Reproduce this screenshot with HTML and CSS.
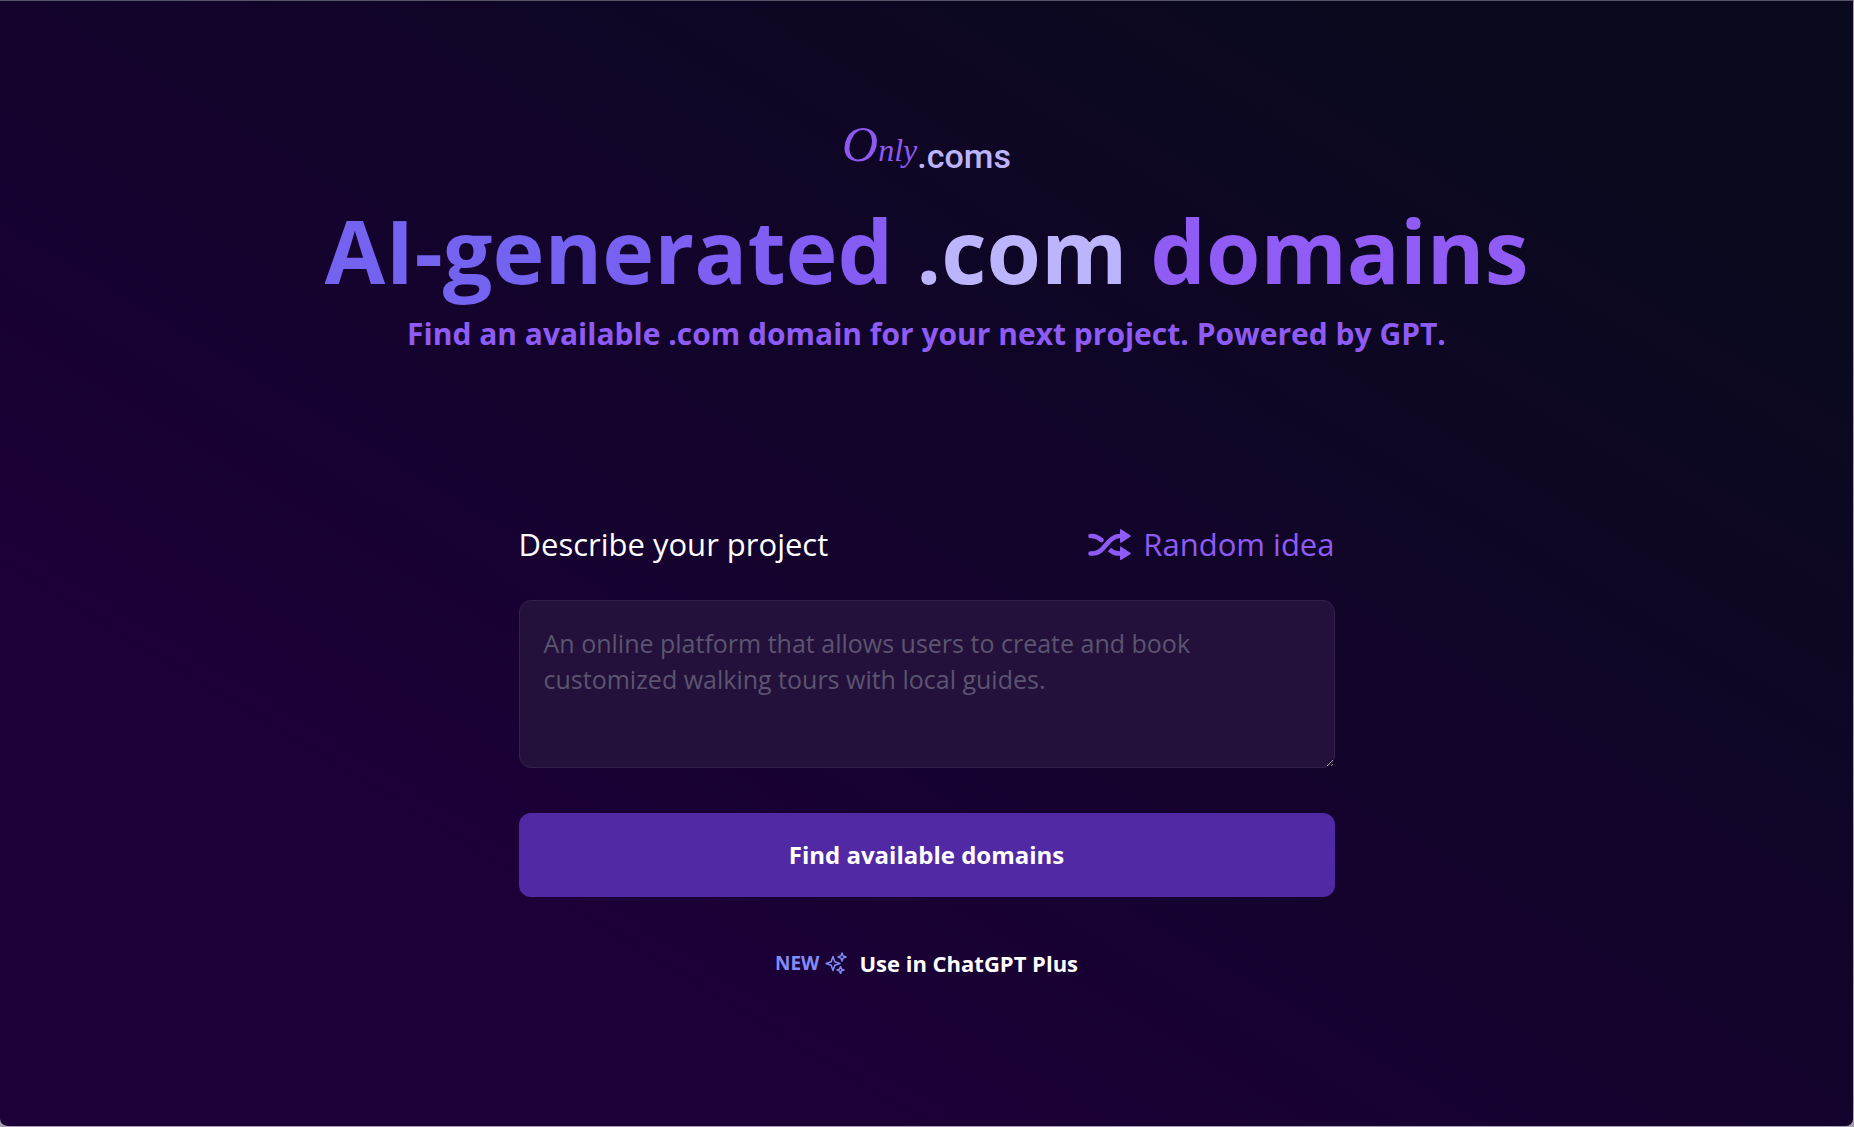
FILE: index.html
```html
<!DOCTYPE html>
<html lang="en">
<head>
<meta charset="utf-8">
<meta name="viewport" content="width=device-width, initial-scale=1">
<title>Only.coms</title>
<link rel="stylesheet" href="styles.css">
</head>
<body>
<main class="page">
  <header class="hero">
    <a class="logo" href="#"><span class="logo-script">Only</span><span class="logo-suffix">.coms</span></a>
    <h1 class="title"><span class="title-start">AI-generated</span> <span class="title-com">.com</span> <span class="title-end">domains</span></h1>
    <p class="subtitle">Find an available .com domain for your next project. Powered by GPT.</p>
  </header>
  <form class="finder">
    <div class="finder-head">
      <label for="project">Describe your project</label>
      <button class="random" type="button">
        <svg class="shuffle" viewBox="0 0 43 31" aria-hidden="true">
          <g fill="none" stroke="currentColor" stroke-width="4.6" stroke-linecap="round">
            <path d="M2.5 7H4Q9 7.200 13.500 11"/>
            <path d="M2.500 24.500H5C17 24.500 19 7 32 7H34"/>
            <path d="M21.500 20.500Q25.500 24.500 31 24.500H34" stroke-linecap="butt"/>
          </g>
          <path fill="currentColor" d="M32 1.200Q32-.5 33.500.4L42.300 6.200Q43.300 7 42.300 7.800L33.500 13.600Q32 14.500 32 12.800ZM32 18.700Q32 17 33.500 17.900L42.300 23.700Q43.300 24.500 42.300 25.300L33.500 30.700Q32 31.500 32 30Z"/>
        </svg>
        Random idea
      </button>
    </div>
    <textarea id="project" class="project" placeholder="An online platform that allows users to create and book customized walking tours with local guides."></textarea>
    <button class="submit" type="submit">Find available domains</button>
  </form>
  <a class="promo" href="#">
    <span class="promo-new">NEW
      <svg class="sparkles" viewBox="0 0 22 22" aria-hidden="true" fill="none" stroke="currentColor" stroke-width="1.5" stroke-linejoin="round">
        <path d="M8 4.500L9.800 9.700L15 11.500L9.800 13.300L8 18.500L6.200 13.300L1 11.500L6.200 9.700Z"/>
        <path d="M17 1L18.100 3.900L21 5L18.100 6.100L17 9L15.900 6.100L13 5L15.900 3.900Z"/>
        <path d="M15.500 14.500L16.400 17.100L19 18L16.400 18.900L15.500 21.500L14.600 18.900L12 18L14.600 17.100Z"/>
      </svg>
    </span>
    <span>Use in ChatGPT Plus</span>
  </a>
</main>
</body>
</html>
```
FILE: styles.css
```css
* {
  box-sizing: border-box;
}

html {
  background: #a79fae;
}

body {
  margin: 0;
  font-family: "Open Sans", "Noto Sans", sans-serif;
  color: #fff;
}

.page {
  min-height: 100vh;
  display: flex;
  flex-direction: column;
  align-items: center;
  padding: 117px 24px 0;
  border: 1px solid #a79fae;
  border-top-color: #57546a;
  border-left: 0;
  border-radius: 0 0 8px 8px;
  background: linear-gradient(to top right, #1d003a, #1c0038 24%, #12042a 55%, #0a091e 85%, #0a091e);
}

.hero {
  display: flex;
  flex-direction: column;
  align-items: center;
  text-align: center;
}

.logo {
  display: flex;
  align-items: flex-end;
  color: #bdb4fe;
  text-decoration: none;
}

.logo-script {
  display: block;
  padding-bottom: 4px;
  font: italic 32px/52px "Liberation Serif", serif;
  color: #8f58f2;
}

.logo-script::first-letter {
  font-size: 50px;
}

.logo-suffix {
  font: 500 34px/48px Roboto, sans-serif;
}

.title {
  margin: 14px 0 0;
  font-size: 88px;
  line-height: 112px;
  font-weight: 700;
}

.title-start {
  color: transparent;
  background: linear-gradient(to right, #7462f1 40%, #875cf4);
  background-clip: text;
}

.title-com {
  color: #bdb4fe;
}

.title-end {
  color: #915bf6;
}

.subtitle {
  margin: 8px 0 0;
  font-size: 30px;
  line-height: 40px;
  font-weight: 700;
  color: #8f5bf6;
}

.finder {
  width: 100%;
  max-width: 816px;
  display: flex;
  flex-direction: column;
  margin-top: 166px;
}

.finder-head {
  display: flex;
  align-items: center;
  justify-content: space-between;
  font-size: 31px;
  line-height: 48px;
}

.random {
  display: flex;
  align-items: center;
  gap: 12px;
  padding: 0;
  border: 0;
  background: none;
  font: inherit;
  color: #8f5bf6;
  cursor: pointer;
}

.shuffle {
  width: 43px;
  height: 31px;
}

.project {
  height: 168px;
  margin-top: 32px;
  padding: 24px;
  border: 1px solid #35204d;
  border-radius: 12px;
  background: #23113b;
  color: #fff;
  font: 25px/36px "Open Sans", "Noto Sans", sans-serif;
  resize: vertical;
}

.project::placeholder {
  color: #5c5470;
}

.submit {
  height: 84px;
  margin-top: 45px;
  border: 0;
  border-radius: 12px;
  background: #5229a5;
  color: #fff;
  font: 700 24px/36px "Open Sans", "Noto Sans", sans-serif;
  cursor: pointer;
}

.promo {
  display: flex;
  align-items: center;
  gap: 12px;
  margin-top: 48px;
  font-size: 22px;
  line-height: 36px;
  font-weight: 700;
  color: #fff;
  text-decoration: none;
}

.promo-new {
  display: flex;
  align-items: center;
  gap: 6px;
  font-size: 19px;
  color: #818cf8;
}

.sparkles {
  width: 22px;
  height: 22px;
}
```
